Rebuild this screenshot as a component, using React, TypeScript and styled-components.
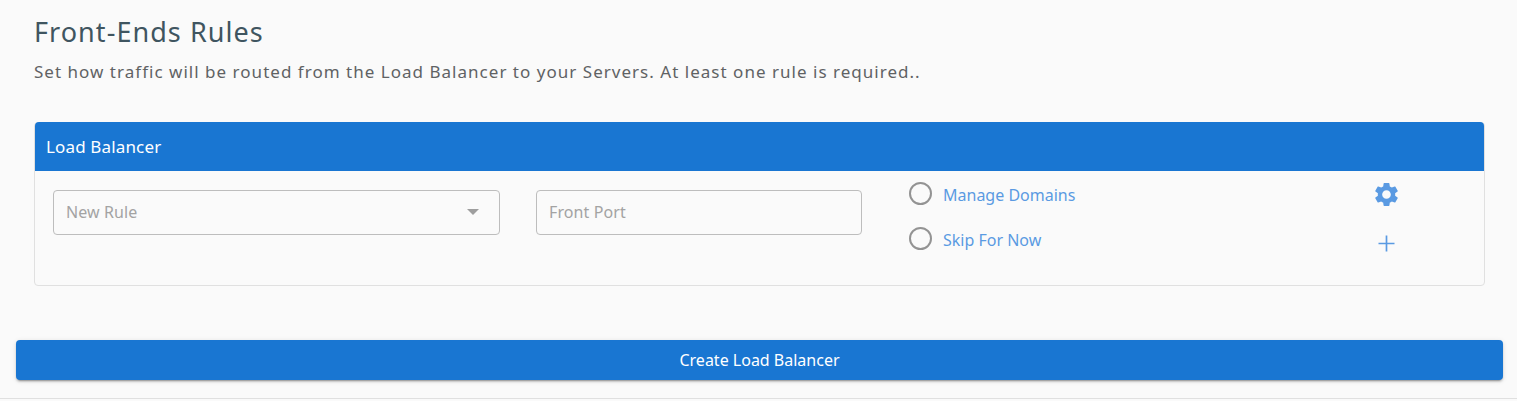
import React from "react";
import styled, { createGlobalStyle } from "styled-components";

const Global = createGlobalStyle`
  html, body { margin: 0; padding: 0; background: #fafafa; }
  * { box-sizing: border-box; }
  body { font-family: "Noto Sans", "Liberation Sans", sans-serif; }
`;

const Page = styled.div`
  height: 399px;
  padding: 0 14px 0 16px;
  border-bottom: 1px solid #e0e0e0;
  display: flex;
  flex-direction: column;
`;
const Section = styled.section`
  padding: 0 18px;
`;
const Title = styled.h2`
  margin: 0;
  padding-top: 14px;
  height: 48px;
  font-size: 27px;
  line-height: 36px;
  font-weight: 400;
  letter-spacing: 1.05px;
  color: #3f5560;
`;
const Subtitle = styled.p`
  margin: 0;
  height: 74px;
  padding-top: 12px;
  font-size: 17px;
  line-height: 24px;
  letter-spacing: 1.02px;
  color: #5f6264;
`;
const Card = styled.div`
  height: 164px;
  border: 1px solid #e0e0e0;
  border-radius: 4px;
`;
const CardHeader = styled.div`
  height: 49px;
  margin-top: -1px;
  padding: 0 0 1px 11px;
  display: flex;
  align-items: center;
  background: #1976d2;
  border-radius: 4px 4px 0 0;
  color: #fff;
  font-size: 17px;
  letter-spacing: 0.15px;
`;
const CardBody = styled.div`
  display: flex;
  align-items: flex-start;
  padding: 19px 0 0 18px;
`;
const Field = styled.div<{ $width: number }>`
  width: ${(p) => p.$width}px;
  height: 45px;
  margin-right: 36px;
  padding: 0 13px 1px 12px;
  border: 1px solid #bdbdbd;
  border-radius: 4px;
  display: flex;
  align-items: center;
  justify-content: space-between;
  font-size: 16px;
  letter-spacing: 0.1px;
  color: #a3a3a3;
`;
const Arrow = styled.span`
  width: 0;
  height: 0;
  margin-right: 7px;
  border-left: 6px solid transparent;
  border-right: 6px solid transparent;
  border-top: 6px solid #9e9e9e;
`;
const Options = styled.div`
  width: 464px;
  margin-left: 11px;
  margin-top: -8px;
  display: flex;
  flex-direction: column;
  gap: 22px;
`;
const Option = styled.label`
  display: flex;
  align-items: center;
  height: 23px;
  gap: 11px;
  font-size: 16px;
  color: #5a9ae2;
`;
const OptionText = styled.span`
  position: relative;
  top: 1px;
`;
const Radio = styled.span`
  width: 23px;
  height: 23px;
  border: 2px solid #939393;
  border-radius: 50%;
  flex: none;
`;
const Actions = styled.div`
  width: 29px;
  margin-top: -10px;
  margin-left: -1px;
  display: flex;
  flex-direction: column;
  color: #5a9ae2;
`;
const IconSvg = styled.svg`
  display: block;
  width: 29px;
  height: 29px;
  fill: currentColor;
`;
const PlusIcon = styled(IconSvg)`
  margin-top: 20px;
  fill: none;
  stroke: currentColor;
  stroke-width: 1.7;
`;
const SubmitRow = styled.div`
  margin-top: 54px;
`;
const Submit = styled.button`
  display: block;
  width: 100%;
  height: 40px;
  border: 0;
  border-radius: 4px;
  background: #1976d2;
  color: #fff;
  font-family: inherit;
  font-size: 16px;
  box-shadow: 0 3px 1px -2px rgba(0,0,0,.2), 0 2px 2px 0 rgba(0,0,0,.14), 0 1px 5px 0 rgba(0,0,0,.12);
`;

export default function App() {
  return (
    <>
      <Global />
      <Page>
        <Section>
          <Title>Front-Ends Rules</Title>
          <Subtitle>Set how traffic will be routed from the Load Balancer to your Servers. At least one rule is required..</Subtitle>
          <Card>
            <CardHeader>Load Balancer</CardHeader>
            <CardBody>
              <Field $width={447}>New Rule<Arrow /></Field>
              <Field $width={326}>Front Port</Field>
              <Options>
                <Option><Radio /><OptionText>Manage Domains</OptionText></Option>
                <Option><Radio /><OptionText>Skip For Now</OptionText></Option>
              </Options>
              <Actions>
                <IconSvg viewBox="0 0 24 24">
                  <path d="M19.14 12.94c.04-.3.06-.61.06-.94 0-.32-.02-.64-.07-.94l2.03-1.58c.18-.14.23-.41.12-.61l-1.92-3.32c-.12-.22-.37-.29-.59-.22l-2.39.96c-.5-.38-1.03-.7-1.62-.94l-.36-2.54c-.04-.24-.24-.41-.48-.41h-3.84c-.24 0-.43.17-.47.41l-.36 2.54c-.59.24-1.13.57-1.62.94l-2.39-.96c-.22-.08-.47 0-.59.22L2.74 8.87c-.12.21-.08.47.12.61l2.03 1.58c-.05.3-.09.63-.09.94s.02.64.07.94l-2.03 1.58c-.18.14-.23.41-.12.61l1.92 3.32c.12.22.37.29.59.22l2.39-.96c.5.38 1.03.7 1.62.94l.36 2.54c.05.24.24.41.48.41h3.84c.24 0 .44-.17.47-.41l.36-2.54c.59-.24 1.13-.56 1.62-.94l2.39.96c.22.08.47 0 .59-.22l1.92-3.32c.12-.22.07-.47-.12-.61l-2.01-1.58zM12 15.6c-1.98 0-3.6-1.62-3.6-3.6s1.62-3.6 3.6-3.6 3.6 1.62 3.6 3.6-1.62 3.6-3.6 3.6z" />
                </IconSvg>
                <PlusIcon viewBox="0 0 29 29">
                  <path d="M14.5 6.5v16M6.5 14.5h16" />
                </PlusIcon>
              </Actions>
            </CardBody>
          </Card>
        </Section>
        <SubmitRow>
          <Submit>Create Load Balancer</Submit>
        </SubmitRow>
      </Page>
    </>
  );
}
